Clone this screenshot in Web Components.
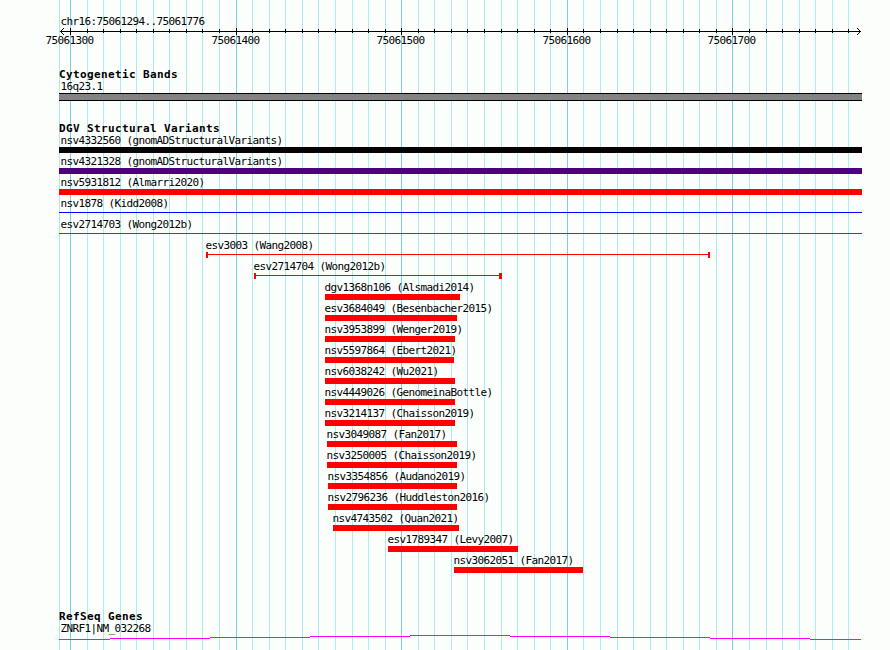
<!DOCTYPE html>
<html lang="en">
<head>
<meta charset="utf-8">
<title>chr16:75061294..75061776</title>
<style>
	body {
		margin: 0;
		background-color: #fcfefc;
		color: #000;
		font-family: "DejaVu Sans Mono", "Liberation Mono", monospace;
		font-size: 11px;
		overflow: hidden;
	}
</style>
</head>
<body>

<genome-browser>
	<genome-ruler region="chr16:75061294..75061776"></genome-ruler>

	<genome-track label="Cytogenetic Bands" style="height: 54px">
		<genome-feature name="16q23.1" start="59" end="862" shape="band"></genome-feature>
	</genome-track>

	<genome-track label="DGV Structural Variants" style="height: 488px">
		<genome-feature name="nsv4332560 (gnomADStructuralVariants)" start="59" end="862" color="#040204"></genome-feature>
		<genome-feature name="nsv4321328 (gnomADStructuralVariants)" start="59" end="862" color="#4b0082"></genome-feature>
		<genome-feature name="nsv5931812 (Almarri2020)" start="59" end="862"></genome-feature>
		<genome-feature name="nsv1878 (Kidd2008)" start="59" end="862" shape="line" color="#00f"></genome-feature>
		<genome-feature name="esv2714703 (Wong2012b)" start="59" end="862" shape="line"></genome-feature>
		<genome-feature name="esv3003 (Wang2008)" start="206" end="710" shape="span"></genome-feature>
		<genome-feature name="esv2714704 (Wong2012b)" start="254" end="502" shape="span" cap="3"></genome-feature>
		<genome-feature name="dgv1368n106 (Alsmadi2014)" start="325" end="460"></genome-feature>
		<genome-feature name="esv3684049 (Besenbacher2015)" start="325" end="457"></genome-feature>
		<genome-feature name="nsv3953899 (Wenger2019)" start="325" end="455"></genome-feature>
		<genome-feature name="nsv5597864 (Ebert2021)" start="325" end="454"></genome-feature>
		<genome-feature name="nsv6038242 (Wu2021)" start="325" end="455"></genome-feature>
		<genome-feature name="nsv4449026 (GenomeinaBottle)" start="325" end="455"></genome-feature>
		<genome-feature name="nsv3214137 (Chaisson2019)" start="325" end="455"></genome-feature>
		<genome-feature name="nsv3049087 (Fan2017)" start="327" end="457"></genome-feature>
		<genome-feature name="nsv3250005 (Chaisson2019)" start="327" end="457"></genome-feature>
		<genome-feature name="nsv3354856 (Audano2019)" start="328" end="457"></genome-feature>
		<genome-feature name="nsv2796236 (Huddleston2016)" start="328" end="457"></genome-feature>
		<genome-feature name="nsv4743502 (Quan2021)" start="333" end="459"></genome-feature>
		<genome-feature name="esv1789347 (Levy2007)" start="388" end="518"></genome-feature>
		<genome-feature name="nsv3062051 (Fan2017)" start="454" end="583"></genome-feature>
	</genome-track>

	<genome-track label="RefSeq Genes">
		<genome-feature name="ZNRF1|NM_032268" start="59" end="861" shape="intron" color="#f0f"></genome-feature>
	</genome-track>
</genome-browser>

<template id="BrowserTemplate">
	<style>
		:host {
			display: block;
			position: relative;
			width: 890px;
			height: 650px;
			overflow: hidden;
		}

		.grid {
			position: absolute;
			top: 0;
			left: 0;
		}

		.tracks {
			position: relative;
			display: flex;
			flex-direction: column;
		}
	</style>
	<svg class="grid" width="890" height="650" shape-rendering="crispEdges"></svg>
	<div class="tracks"><slot></slot></div>
</template>

<template id="RulerTemplate">
	<style>
		:host {
			display: block;
			height: 68px;
		}

		svg {
			display: block;
		}

		text {
			font-size: 11px;
			letter-spacing: -0.622px;
			white-space: pre;
		}
	</style>
	<svg width="890" height="68"></svg>
</template>

<template id="TrackTemplate">
	<style>
		:host {
			display: block;
			flex: none;
		}

		.title {
			height: 12px;
			line-height: 14px;
			padding-left: 59px;
			font-weight: bold;
			letter-spacing: 0.378px;
			white-space: pre;
		}
	</style>
	<div class="title"></div>
	<slot></slot>
</template>

<template id="FeatureTemplate">
	<style>
		:host {
			display: block;
			height: 21px;
		}

		.name {
			height: 13px;
			line-height: 13px;
			letter-spacing: -0.622px;
			white-space: pre;
		}

		svg {
			display: block;
			overflow: visible;
		}
	</style>
	<div class="name"></div>
	<svg width="890" height="8" shape-rendering="crispEdges"></svg>
</template>

<script>
	// one line every 10 bp, rounded to whole pixels
	const GRID = [59, 70, 87, 103, 120, 136, 153, 169, 186, 202, 219, 236, 252, 269, 285, 302, 318,
		335, 352, 368, 385, 401, 418, 434, 451, 467, 484, 501, 517, 534, 550, 567, 583, 600, 617,
		633, 650, 666, 683, 699, 716, 732, 749, 766, 782, 799, 815, 832, 848];

	// every 100 bp
	const MAJOR = { 70: '75061300', 236: '75061400', 401: '75061500', 567: '75061600', 732: '75061700' };

	function rect(x, y, width, height, fill) {
		return `<rect x="${x}" y="${y}" width="${width}" height="${height}" fill="${fill}"/>`;
	}

	function attachTemplate(element, id) {
		const root = element.attachShadow({mode: 'open'});
		root.appendChild(document.getElementById(id).content.cloneNode(true));
		return root;
	}

	class GenomeBrowser extends HTMLElement {
		connectedCallback() {
			const root = attachTemplate(this, 'BrowserTemplate');
			root.querySelector('.grid').innerHTML = GRID
				.map(x => rect(x, 0, 1, 650, MAJOR[x] ? '#7fcbe8' : '#acecea'))
				.join('');
		}
	}

	class GenomeRuler extends HTMLElement {
		connectedCallback() {
			const root = attachTemplate(this, 'RulerTemplate');
			let out = `<text x="60.5" y="25">${this.getAttribute('region')}</text>`;
			out += '<g shape-rendering="crispEdges">' + rect(60, 31, 801, 1, '#000');
			// arrow heads, one pixel per step
			for (let i = 1; i < 4; i++) {
				for (const y of [31 - i, 31 + i]) {
					out += rect(60 + i, y, 1, 1, '#000') + rect(860 - i, y, 1, 1, '#000');
				}
			}
			for (const x of GRID.slice(1)) {
				out += MAJOR[x] ? rect(x, 28, 1, 7, '#000') : rect(x, 29, 1, 4, '#000');
			}
			out += '</g>';
			for (const x in MAJOR) {
				out += `<text x="${x - 24.5}" y="44">${MAJOR[x]}</text>`;
			}
			root.querySelector('svg').innerHTML = out;
		}
	}

	class GenomeTrack extends HTMLElement {
		connectedCallback() {
			const root = attachTemplate(this, 'TrackTemplate');
			root.querySelector('.title').textContent = this.getAttribute('label');
		}
	}

	class GenomeFeature extends HTMLElement {
		connectedCallback() {
			const root = attachTemplate(this, 'FeatureTemplate');
			const start = Number(this.getAttribute('start'));
			const end = Number(this.getAttribute('end'));
			const name = root.querySelector('.name');
			name.textContent = this.getAttribute('name');
			name.style.paddingLeft = Math.max(60, start - 1) + 0.5 + 'px';
			root.querySelector('svg').innerHTML = this.draw(start, end);
		}

		draw(start, end) {
			const color = this.getAttribute('color') || '#f00';
			const width = end - start;

			switch (this.getAttribute('shape')) {
				case 'band':
					return rect(start, 0, width, 8, '#000') + rect(start, 1, width, 6, '#848284');
				case 'line':
					return rect(start, 2, width, 1, color);
				case 'span': {
					const cap = Number(this.getAttribute('cap') || 2);
					return rect(start, 2, width, 1, color) + rect(start, 0, 2, 6, color) +
						rect(end - cap, 0, cap, 6, color);
				}
				case 'intron': {
					// shallow peak, a pixel up or down every 100px
					const steps = [59, 110, 210, 310, 410, 510, 610, 710, 810, 861];
					return steps.slice(0, -1)
						.map((x, i) => rect(x, Math.abs(4 - i), steps[i + 1] - x, 1, color))
						.join('');
				}
				default:
					return rect(start, 0, width, 6, color);
			}
		}
	}

	customElements.define('genome-browser', GenomeBrowser);
	customElements.define('genome-ruler', GenomeRuler);
	customElements.define('genome-track', GenomeTrack);
	customElements.define('genome-feature', GenomeFeature);
</script>
</body>
</html>
